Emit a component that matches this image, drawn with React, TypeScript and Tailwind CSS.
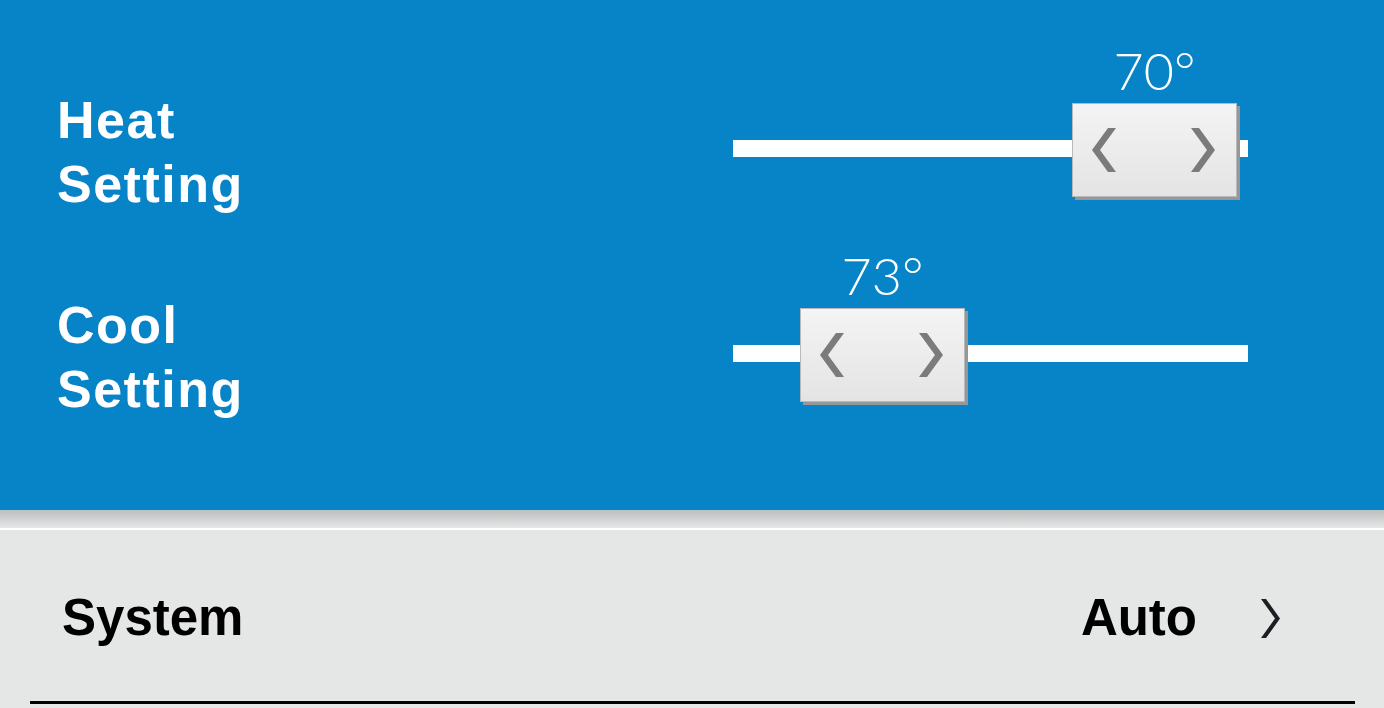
import React from 'react';

const Chevron = ({ dir }: { dir: 'left' | 'right' }) => (
  <svg width="24" height="44" viewBox="0 0 24 44" className="block">
    <polygon
      fill="#7b7b7b"
      points={dir === 'left' ? '16,0 24,0 8,22 24,44 16,44 0,22' : '0,0 8,0 24,22 8,44 0,44 16,22'}
    />
  </svg>
);

type SliderProps = { label: [string, string]; value: number; offset: number };

const SettingRow: React.FC<SliderProps> = ({ label, value, offset }) => (
  <div className="flex h-[205px] items-center">
    <div className="mt-[6px] pl-[57px] text-[52px] font-bold leading-[64px] tracking-[1.5px] text-white">
      <div>{label[0]}</div>
      <div>{label[1]}</div>
    </div>
    {/* slider */}
    <div className="relative ml-auto mr-[136px] h-[17px] w-[515px] bg-white">
      <div className="absolute top-[-37px]" style={{ left: offset }}>
        <div className="absolute bottom-[100%] left-0 mb-[7px] w-[165px] text-center font-['Lato',sans-serif] text-[52px] font-light leading-none text-white">
          {value}°
        </div>
        <div className="flex h-[94px] w-[165px] items-center justify-between border border-[#b9b9b9] bg-gradient-to-b from-[#f4f4f4] to-[#e4e4e4] pl-[19px] pr-[21px] shadow-[3px_3px_0_#979797]">
          <Chevron dir="left" />
          <Chevron dir="right" />
        </div>
      </div>
    </div>
  </div>
);

export default function App() {
  return (
    <div className="h-[708px] w-[1384px] overflow-hidden bg-[#e5e6e6] font-['Liberation_Sans',Arial,sans-serif]">
      <div className="h-[510px] bg-[#0784c8] pt-[46px]">
        <SettingRow label={['Heat', 'Setting']} value={70} offset={339} />
        <SettingRow label={['Cool', 'Setting']} value={73} offset={67} />
      </div>
      <div className="h-[18px] bg-gradient-to-b from-[#bcbebf] to-[#e6e7e7]" />
      <div className="h-[2px] bg-white" />
      <div className="flex h-[171px] items-center pl-[62px] pr-[104px] pt-[6px]">
        <div className="text-[51px] font-bold text-black">System</div>
        <div className="ml-auto text-[51px] font-bold text-black">Auto</div>
        <svg width="19" height="39" viewBox="0 0 19 39" className="ml-[64px]">
          <polygon fill="#1b1e22" points="0,0 5,0 19,19.5 5,39 0,39 14,19.5" />
        </svg>
      </div>
      <div className="ml-[30px] h-[3px] w-[1325px] bg-black" />
    </div>
  );
}
